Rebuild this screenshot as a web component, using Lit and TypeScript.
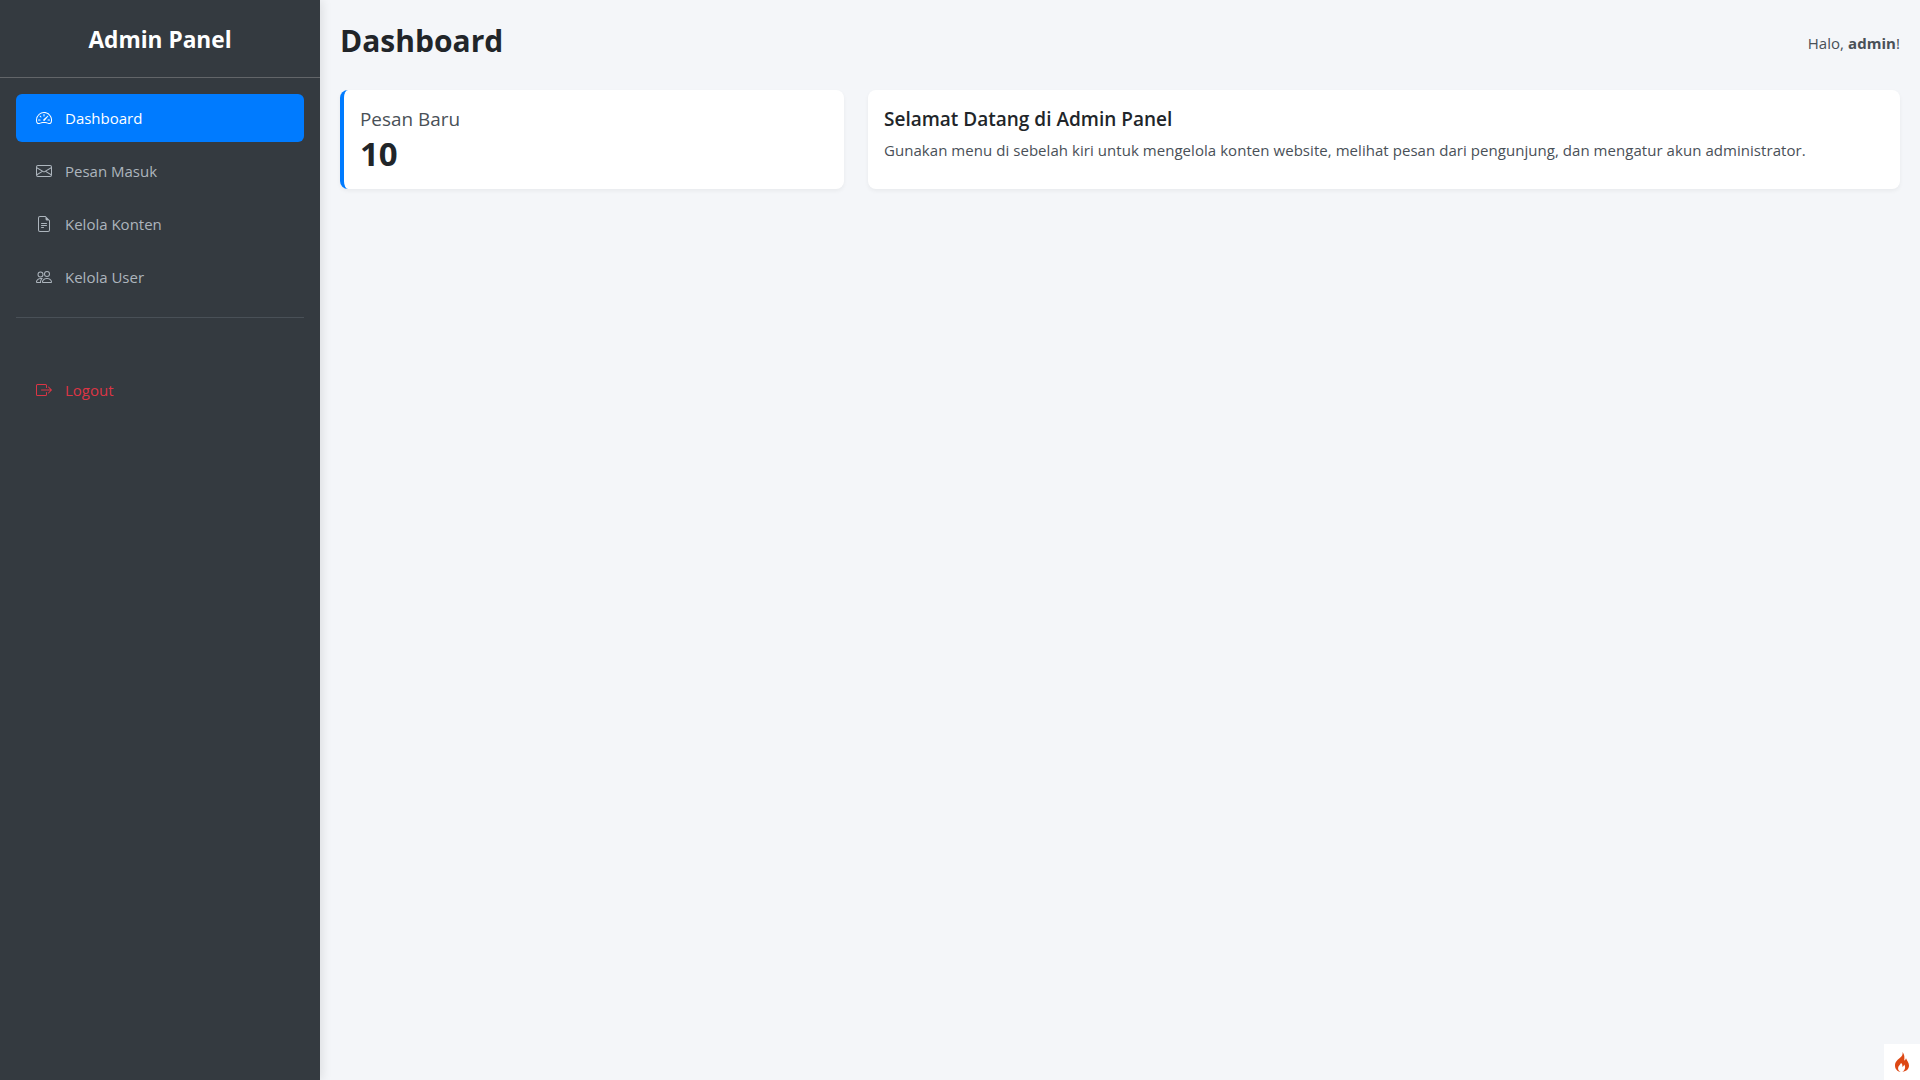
import { LitElement, html, css, svg } from "lit";
import { customElement } from "lit/decorators.js";

const icons = {
  speed: svg`<path d="M8 4a.5.5 0 0 1 .5.5V6a.5.5 0 0 1-1 0V4.500A.5.5 0 0 1 8 4zM3.732 5.732a.5.5 0 0 1 .707 0l.915.914a.5.5 0 1 1-.708.708l-.914-.915a.5.5 0 0 1 0-.707zM2 10a.5.5 0 0 1 .5-.5h1.586a.5.5 0 0 1 0 1H2.500A.5.5 0 0 1 2 10zm9.500 0a.5.5 0 0 1 .5-.5h1.500a.5.5 0 0 1 0 1H12a.5.5 0 0 1-.5-.5zm.754-4.246a.389.389 0 0 0-.527-.02L7.547 9.310a.91.91 0 1 0 1.302 1.258l3.434-4.297a.389.389 0 0 0-.029-.518z"/><path fill-rule="evenodd" d="M0 10a8 8 0 1 1 15.547 2.661c-.442 1.253-1.845 1.602-2.932 1.250C11.309 13.488 9.475 13 8 13c-1.474 0-3.310.488-4.615.911-1.087.352-2.490.003-2.932-1.250A7.988 7.988 0 0 1 0 10zm8-7a7 7 0 0 0-6.603 9.329c.203.575.923.876 1.680.63C4.397 12.533 6.358 12 8 12s3.604.532 4.923.96c.757.245 1.477-.056 1.680-.631A7 7 0 0 0 8 3z"/>`,
  mail: svg`<path d="M0 4a2 2 0 0 1 2-2h12a2 2 0 0 1 2 2v8a2 2 0 0 1-2 2H2a2 2 0 0 1-2-2V4Zm2-1a1 1 0 0 0-1 1v.217l7 4.200 7-4.200V4a1 1 0 0 0-1-1H2Zm13 2.383-4.708 2.825L15 11.105V5.383Zm-.034 6.876-5.640-3.471L8 9.583l-1.326-.795-5.640 3.470A1 1 0 0 0 2 13h12a1 1 0 0 0 .966-.741ZM1 11.105l4.708-2.897L1 5.383v5.722Z"/>`,
  file: svg`<path d="M5.500 7a.5.5 0 0 0 0 1h5a.5.5 0 0 0 0-1h-5zM5 9.500a.5.5 0 0 1 .5-.5h5a.5.5 0 0 1 0 1h-5a.5.5 0 0 1-.5-.5zm0 2a.5.5 0 0 1 .5-.5h2a.5.5 0 0 1 0 1h-2a.5.5 0 0 1-.5-.5z"/><path d="M9.500 0H4a2 2 0 0 0-2 2v12a2 2 0 0 0 2 2h8a2 2 0 0 0 2-2V4.500L9.500 0zm0 1v2A1.500 1.500 0 0 0 11 4.500h2V14a1 1 0 0 1-1 1H4a1 1 0 0 1-1-1V2a1 1 0 0 1 1-1h5.500z"/>`,
  people: svg`<path d="M15 14s1 0 1-1-1-4-5-4-5 3-5 4 1 1 1 1h8Zm-7.978-1A.261.261 0 0 1 7 12.996c.001-.264.167-1.030.76-1.720C8.312 10.629 9.282 10 11 10c1.717 0 2.687.63 3.240 1.276.593.69.758 1.457.76 1.720l-.008.002a.274.274 0 0 1-.014.002H7.022ZM11 7a2 2 0 1 0 0-4 2 2 0 0 0 0 4Zm3-2a3 3 0 1 1-6 0 3 3 0 0 1 6 0ZM6.936 9.280a5.880 5.880 0 0 0-1.230-.247A7.350 7.350 0 0 0 5 9c-4 0-5 3-5 4 0 .667.333 1 1 1h4.216A2.238 2.238 0 0 1 5 13c0-1.010.377-2.042 1.090-2.904.243-.294.526-.569.846-.816ZM4.920 10A5.493 5.493 0 0 0 4 13H1c0-.26.164-1.030.76-1.724.545-.636 1.492-1.256 3.160-1.275ZM1.500 5.500a3 3 0 1 1 6 0 3 3 0 0 1-6 0Zm3-2a2 2 0 1 0 0 4 2 2 0 0 0 0-4Z"/>`,
  logout: svg`<path fill-rule="evenodd" d="M10 12.500a.5.5 0 0 1-.5.5h-8a.5.5 0 0 1-.5-.5v-9a.5.5 0 0 1 .5-.5h8a.5.5 0 0 1 .5.5v2a.5.5 0 0 0 1 0v-2A1.500 1.500 0 0 0 9.500 2h-8A1.500 1.500 0 0 0 0 3.500v9A1.500 1.500 0 0 0 1.500 14h8a1.500 1.500 0 0 0 1.500-1.500v-2a.5.5 0 0 0-1 0v2z"/><path fill-rule="evenodd" d="M15.854 8.354a.5.5 0 0 0 0-.708l-3-3a.5.5 0 0 0-.708.708L14.293 7.500H5.500a.5.5 0 0 0 0 1h8.793l-2.147 2.146a.5.5 0 0 0 .708.708l3-3z"/>`,
};

const icon = (k: keyof typeof icons) =>
  html`<svg class="ico" viewBox="0 0 16 16" fill="currentColor">${icons[k]}</svg>`;

@customElement("app-root")
export class AppRoot extends LitElement {
  static styles = css`
    :host {
      display: block;
      height: 1080px;
      overflow: hidden;
      position: relative;
      background: #f4f6f9;
      font-family: "Open Sans", "Noto Sans", sans-serif;
      color: #212529;
      font-size: 15px;
    }
    .layout { display: flex; height: 1080px; }
    .side {
      width: 320px;
      flex: none;
      background: #343a40;
      box-shadow: 2px 0 10px rgba(0, 0, 0, 0.1);
      display: flex;
      flex-direction: column;
    }
    .brand {
      height: 76px;
      padding-top: 1px;
      border-bottom: 1px solid #626569;
      display: flex;
      align-items: center;
      justify-content: center;
      color: #fff;
      font-size: 22.7px;
      font-weight: 700;
      box-sizing: content-box;
    }
    nav { padding: 16px 16px 0; display: flex; flex-direction: column; gap: 5px; }
    .item {
      height: 48px;
      border-radius: 6px;
      display: flex;
      align-items: center;
      padding-left: 20px;
      gap: 13px;
      color: #adb5bd;
      font-size: 15px;
    }
    .item.active { background: #007bff; color: #fff; }
    .item.logout { color: #dc3545; }
    .ico { width: 16px; height: 16px; flex: none; }
    .rule { height: 1px; background: #495057; margin: 11px 0 43px; }
    main { flex: 1; padding: 20px; min-width: 0; }
    .top { display: flex; justify-content: space-between; align-items: center; height: 40px; margin-bottom: 30px; }
    h1 { margin: 0; font-size: 30px; font-weight: 700; }
    .hello { color: #495057; font-size: 15px; letter-spacing: 0.05px; padding-top: 6px; }
    .hello b { font-weight: 700; }
    .cards { display: grid; grid-template-columns: 504px 1fr; gap: 24px; }
    .card {
      background: #fff;
      border-radius: 8px;
      height: 99px;
      box-shadow: 0 2px 4px rgba(0, 0, 0, 0.05);
      box-sizing: border-box;
    }
    .stat { border-left: 4px solid #007bff; padding: 15px 16px; }
    .stat .label { font-size: 18.9px; color: #495057; line-height: 28px; }
    .stat .num { font-size: 33px; font-weight: 700; line-height: 42px; }
    .welcome { padding: 15px 16px; }
    .welcome h3 { margin: 0; font-size: 19px; font-weight: 600; line-height: 28px; }
    .welcome p { margin: 5px 0 0; font-size: 15px; letter-spacing: 0.05px; line-height: 24px; color: #495057; }
    .badge {
      position: absolute;
      right: 0;
      bottom: 0;
      width: 36px;
      height: 36px;
      background: #fff;
      display: flex;
      align-items: center;
      justify-content: center;
    }
    .badge svg { width: 16px; height: 20px; }
  `;

  render() {
    return html`<div class="layout">
        <aside class="side">
          <div class="brand">Admin Panel</div>
          <nav>
            <div class="item active">${icon("speed")}<span>Dashboard</span></div>
            <div class="item">${icon("mail")}<span>Pesan Masuk</span></div>
            <div class="item">${icon("file")}<span>Kelola Konten</span></div>
            <div class="item">${icon("people")}<span>Kelola User</span></div>
            <div class="rule"></div>
            <div class="item logout">${icon("logout")}<span>Logout</span></div>
          </nav>
        </aside>
        <main>
          <header class="top">
            <h1>Dashboard</h1>
            <div class="hello">Halo, <b>admin</b>!</div>
          </header>
          <section class="cards">
            <div class="card stat">
              <div class="label">Pesan Baru</div>
              <div class="num">10</div>
            </div>
            <div class="card welcome">
              <h3>Selamat Datang di Admin Panel</h3>
              <p>Gunakan menu di sebelah kiri untuk mengelola konten website, melihat pesan dari pengunjung, dan mengatur akun administrator.</p>
            </div>
          </section>
        </main>
      </div>
      <div class="badge">
        <svg viewBox="0 0 16 20"><path fill="#dd4814" fill-rule="evenodd" d="M8.500 0c.6 2.600-.6 4-2.200 5.600C4.200 7.600 1 9.600 1 13.400 1 16.800 3.400 19.400 6.600 20c-1.700-.9-2.700-2.300-2.500-4 .2-1.900 2-3 2.900-4.900 1.500 1.100 1.600 2.500 1.200 3.700 1-.1 1.800-1 2-2.200.9 1.300 1.100 2.500.8 3.600-.3 1.500-1.200 2.800-2.700 3.700C12.800 19.300 15 16.800 15 13.500c0-3.200-2.100-4.800-3-7.300-.4 1.200-.9 2-1.800 2.400C10.600 5.600 10.600 2.300 8.500 0Z"/></svg>
      </div>`;
  }
}
